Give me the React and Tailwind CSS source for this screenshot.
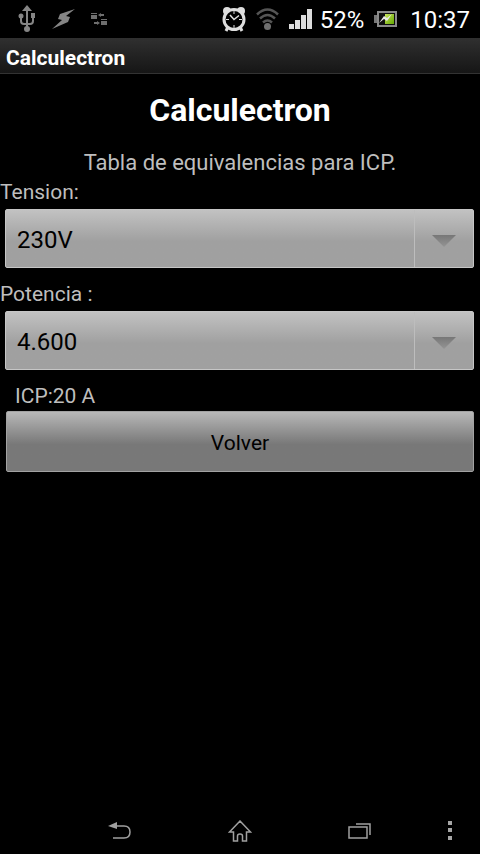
import { useState } from "react";

const VOLTAGES = ["230V", "400V"];

const BREAKERS = {
  "2.300": 10,
  "3.450": 15,
  "4.600": 20,
  "5.750": 25,
};

function StatusBar() {
  return (
    <div className="flex h-[38px] items-center justify-between pr-[10px] pl-[18px]">
      {/* Notifications */}
      <div className="flex items-center">
        <svg width="18" height="28" viewBox="0 0 18 28" fill="none" stroke="#858585" strokeWidth="2">
          <path d="M9 5v18M3 13v3q0 3 3 3h6q3 0 3-3v-3" />
          <path d="M9 0l5 6H4z" fill="#858585" stroke="none" />
          <circle cx="9" cy="24" r="3" fill="#858585" stroke="none" />
          <circle cx="3" cy="11" r="2.500" fill="#858585" stroke="none" />
          <path d="M13 8h4v5h-4z" fill="#858585" stroke="none" />
        </svg>
        <svg className="ml-4" width="23" height="20" viewBox="0 0 23 20" fill="#858585">
          <path d="M23 0L8 5L6 10l4 1L0 20l16-7 2-5-4-1z" />
        </svg>
        <svg className="ml-4" width="16" height="13" viewBox="0 0 16 13" fill="#6e6e6e">
          <path d="M0 0h6v1H0zM0 2h6v4H0zM10 6h6v1h-6zM10 8h6v4h-6z" />
          <path d="M7 2l3-2v1h3v2h-3v1zM9 10l-3-2v1H3v2h3v1z" />
        </svg>
      </div>

      {/* System state */}
      <div className="flex items-center text-2xl text-white">
        <svg width="24" height="26" viewBox="0 0 24 26" fill="none" stroke="#dedede">
          <path d="M6 21l-2 4M18 21l2 4" strokeWidth="3" />
          <circle cx="5" cy="5" r="4" fill="#dedede" stroke="none" />
          <circle cx="19" cy="5" r="4" fill="#dedede" stroke="none" />
          <circle cx="12" cy="13.5" r="10" fill="#000" strokeWidth="3" />
          <path d="M12 5v3M12 19v3M4 13.5h3M17 13.5h3" strokeWidth="1" />
          <path d="M8 9l4 4.500 5-4" strokeWidth="1.500" />
        </svg>
        <svg className="ml-[10px]" width="23" height="23" viewBox="0 0 23 23" fill="none" stroke="#555" strokeWidth="2.500">
          <path d="M1 6.500q10.500-10 21 0M4 10.500q7.500-7 15 0M7 14.500q4.500-4 9 0" />
          <circle cx="11.500" cy="18.500" r="3.500" fill="#707070" stroke="none" />
        </svg>
        <svg className="ml-[10px]" width="24" height="20" viewBox="0 0 24 20" fill="#dcdcdc">
          <path d="M0 15h5v5H0zM6 11h5v9H6zM12 6h5v14h-5zM18 0h5v20h-5z" />
        </svg>
        <span className="ml-[7px] pt-[2px]">52%</span>
        <svg className="ml-[10px]" width="23" height="16" viewBox="0 0 23 16">
          <defs>
            <linearGradient id="charge" x1="0" y1="0" x2="1" y2="1">
              <stop offset="0" stopColor="#c8e45c" />
              <stop offset="1" stopColor="#64a800" />
            </linearGradient>
          </defs>
          <path d="M0 4h4v8H0z" fill="#777" />
          <path d="M4 1h18v14H4z" fill="#101010" stroke="#8a8a8a" strokeWidth="2" />
          <path d="M11 3h9v10H11z" fill="url(#charge)" />
          <path d="M18 3l-5 7-3-2-5 4 5-7 3 2z" fill="#e8e8e8" />
        </svg>
        <span className="ml-[13px] pt-[2px]">10:37</span>
      </div>
    </div>
  );
}

function Spinner({ id, label, value, options, onChange }) {
  return (
    <div className="flex flex-col">
      <label htmlFor={id} className="h-[34px] text-[21px] leading-[34px]">
        {label}
      </label>
      <div className="relative mr-[6px] mb-[9px] ml-[5px]">
        <select
          id={id}
          value={value}
          onChange={(e) => onChange(e.target.value)}
          className="block h-[59px] w-full appearance-none rounded-[2px] border border-[#c6c6c6] bg-linear-to-b from-[#c2c2c2] to-[#a0a0a0] to-55% pt-[2px] pr-16 pl-[11px] text-2xl text-black"
        >
          {options.map((option) => (
            <option key={option}>{option}</option>
          ))}
        </select>
        {/* Drop-down handle over the right end of the select */}
        <div className="pointer-events-none absolute inset-y-px right-px flex w-[59px] items-center justify-center border-l border-[#bdbdbd]">
          <svg className="mt-1" width="24" height="12" viewBox="0 0 24 12">
            <defs>
              <linearGradient id={`${id}-arrow`} x1="0" y1="0" x2="0" y2="1">
                <stop offset="0" stopColor="#777" />
                <stop offset="1" stopColor="#949494" />
              </linearGradient>
            </defs>
            <path d="M0 0h24L12 12z" fill={`url(#${id}-arrow)`} />
          </svg>
        </div>
      </div>
    </div>
  );
}

function NavBar() {
  return (
    <nav className="flex h-12 items-center pt-px pl-[60px]">
      <button aria-label="Back" className="flex flex-1 justify-center">
        <svg width="24" height="18" viewBox="0 0 24 18" fill="none" stroke="#a0a0a0" strokeWidth="1.500">
          <path d="M8 4h8q6 0 6 6t-6 6H5" />
          <path d="M0 4l9-4v7z" fill="#a0a0a0" stroke="none" />
        </svg>
      </button>
      <button aria-label="Home" className="flex flex-1 justify-center">
        <svg width="24" height="22" viewBox="0 0 24 22" fill="none" stroke="#a0a0a0" strokeWidth="1.500">
          <path d="M12 1L1.500 12H5.500v9h4v-5q0-2 2.500-2t2.500 2v5h4v-9h4z" />
        </svg>
      </button>
      <button aria-label="Recent apps" className="flex flex-1 justify-center">
        <svg width="24" height="16" viewBox="0 0 24 16" fill="none" stroke="#a0a0a0" strokeWidth="1.500">
          <path d="M1 4h18v11H1zM8 1h14v11" />
        </svg>
      </button>
      <button aria-label="Menu" className="flex w-[60px] justify-center">
        <svg width="4" height="19" viewBox="0 0 4 19" fill="#a6a6a6">
          <path d="M0 0h4v4H0zM0 7h4v4H0zM0 15h4v4H0z" />
        </svg>
      </button>
    </nav>
  );
}

export default function App() {
  const [voltage, setVoltage] = useState("230V");
  const [power, setPower] = useState("4.600");

  return (
    <div className="flex min-h-screen flex-col bg-black font-[Roboto,sans-serif] text-[#bebebe]">
      <StatusBar />
      <header className="flex h-9 items-center border-b border-[#333] bg-linear-to-b from-[#303030] to-[#161616] pt-[6px] pl-[6px] text-[21px] font-bold text-white">
        Calculectron
      </header>

      <main className="flex flex-1 flex-col">
        <h1 className="mt-[14px] text-center text-[32px] leading-[44px] font-bold text-white">
          Calculectron
        </h1>
        <p className="mt-[18px] text-center text-[22px] leading-[25px]">
          Tabla de equivalencias para ICP.
        </p>
        <Spinner
          id="voltage"
          label="Tension:"
          value={voltage}
          options={VOLTAGES}
          onChange={setVoltage}
        />
        <Spinner
          id="power"
          label="Potencia :"
          value={power}
          options={Object.keys(BREAKERS)}
          onChange={setPower}
        />
        <output htmlFor="voltage power" className="h-8 pl-[15px] text-[21px] leading-[34px]">
          ICP:{BREAKERS[power]} A
        </output>
        <button className="mx-[6px] h-[61px] rounded-[2px] border border-[#a2a2a2] bg-linear-to-b from-[#b8b8b8] to-[#787878] to-55% pt-1 text-[21px] text-black">
          Volver
        </button>
      </main>

      <NavBar />
    </div>
  );
}
